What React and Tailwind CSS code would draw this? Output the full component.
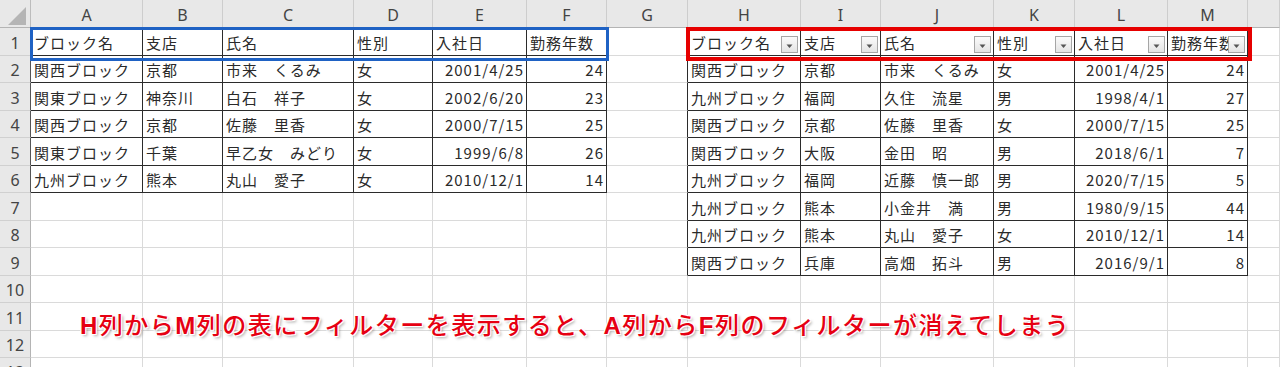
import React from "react";

const COLS = ["A", "B", "C", "D", "E", "F", "G", "H", "I", "J", "K", "L", "M", ""];

const HEAD = ["ブロック名", "支店", "氏名", "性別", "入社日", "勤務年数"];

const LEFT = [
  HEAD,
  ["関西ブロック", "京都", "市来　くるみ", "女", "2001/4/25", "24"],
  ["関東ブロック", "神奈川", "白石　祥子", "女", "2002/6/20", "23"],
  ["関西ブロック", "京都", "佐藤　里香", "女", "2000/7/15", "25"],
  ["関東ブロック", "千葉", "早乙女　みどり", "女", "1999/6/8", "26"],
  ["九州ブロック", "熊本", "丸山　愛子", "女", "2010/12/1", "14"],
];

const RIGHT = [
  HEAD,
  ["関西ブロック", "京都", "市来　くるみ", "女", "2001/4/25", "24"],
  ["九州ブロック", "福岡", "久住　流星", "男", "1998/4/1", "27"],
  ["関西ブロック", "京都", "佐藤　里香", "女", "2000/7/15", "25"],
  ["関西ブロック", "大阪", "金田　昭", "男", "2018/6/1", "7"],
  ["九州ブロック", "福岡", "近藤　慎一郎", "男", "2020/7/15", "5"],
  ["九州ブロック", "熊本", "小金井　満", "男", "1980/9/15", "44"],
  ["九州ブロック", "熊本", "丸山　愛子", "女", "2010/12/1", "14"],
  ["関西ブロック", "兵庫", "高畑　拓斗", "男", "2016/9/1", "8"],
];

function FilterButton() {
  return (
    <div className="absolute right-[2px] bottom-[2px] w-[17px] h-[17px] border border-[#a6a6a6] bg-gradient-to-b from-[#fbfbfb] to-[#e4e4e4] flex items-center justify-center">
      <svg width="7" height="5" viewBox="0 0 7 5" className="mt-[3px]">
        <path d="M0.5 0.5 L6.5 0.5 L3.5 4 Z" fill="#555" />
      </svg>
    </div>
  );
}

function Cell({ r, c }) {
  let text = "";
  let inTable = false;
  let filter = false;
  if (r >= 1 && r <= 6 && c >= 1 && c <= 6) {
    text = LEFT[r - 1][c - 1];
    inTable = true;
  }
  if (r >= 1 && r <= 9 && c >= 8 && c <= 13) {
    text = RIGHT[r - 1][c - 8];
    inTable = true;
    if (r === 1) filter = true;
  }
  const numeric = r >= 2 && (c === 5 || c === 6 || c === 12 || c === 13);
  const rightBlack = inTable || (c === 7 && r >= 1 && r <= 9);
  const bottomBlack = inTable;
  return (
    <div
      className={[
        "relative overflow-hidden flex items-center whitespace-nowrap border-r border-b text-[15px] tracking-[1px] text-[#2a2a2a]",
        rightBlack ? "border-r-[#2b2b2b]" : "border-r-[#dadada]",
        bottomBlack ? "border-b-[#2b2b2b]" : "border-b-[#dadada]",
        numeric ? "justify-end pr-[2px]" : "pl-[3px]",
      ].join(" ")}
    >
      <span className="leading-none pt-[1px]">{text}</span>
      {filter && <FilterButton />}
    </div>
  );
}

export default function App() {
  const rows = [];
  rows.push(
    <div
      key="corner"
      className="relative bg-[#e8e8e8] border-r border-b border-r-[#bcbcbc] border-b-[#b4b4b4]"
    >
      <svg width="30" height="27" className="absolute left-0 top-0">
        <path d="M8 25 L26 25 L26 7 Z" fill="#b5b5b5" />
      </svg>
    </div>
  );
  COLS.forEach((L, i) =>
    rows.push(
      <div
        key={"h" + i}
        className="bg-[#e8e8e8] border-r border-b border-r-[#cdcdcd] border-b-[#b4b4b4] flex items-center justify-center pt-[3px] text-[16px] text-[#444] font-['Noto_Sans',sans-serif]"
      >
        {L}
      </div>
    )
  );
  for (let r = 1; r <= 13; r++) {
    rows.push(
      <div
        key={"rh" + r}
        className={[
          "bg-[#e8e8e8] border-r border-b border-b-[#d0d0d0] flex items-center justify-center pt-[2px] text-[16px] text-[#444] font-['Noto_Sans',sans-serif]",
          r <= 6 ? "border-r-[#555]" : "border-r-[#b4b4b4]",
        ].join(" ")}
      >
        {r}
      </div>
    );
    for (let c = 1; c <= 14; c++) {
      rows.push(<Cell key={r + "-" + c} r={r} c={c} />);
    }
  }

  return (
    <div className="relative w-[1280px] h-[367px] overflow-hidden bg-white font-['Noto_Sans_CJK_JP',sans-serif]">
      <div className="grid grid-cols-[31px_112px_80px_131px_79px_94px_80px_81px_113px_80px_113px_81px_93px_80px_32px] grid-rows-[28px_28px_27px_28px_27px_28px_27px_28px_27px_28px_27px_28px_27px_27px]">
        {rows}
      </div>
      <div className="absolute left-[30px] top-[27px] w-[579px] h-[34px] border-[3px] border-[#1f62c4]" />
      <div className="absolute left-[686px] top-[27px] w-[566px] h-[34px] border-[4px] border-[#e60000]" />
      <div className="absolute left-[80px] top-[308px] leading-[32px] text-[24px] font-medium tracking-[1.5px] text-[#e60012] whitespace-nowrap [text-shadow:-1px_-1px_0_#fff,1px_-1px_0_#fff,-1px_1px_0_#fff,1px_1px_0_#fff,2px_2px_3px_rgba(0,0,0,0.35)]">
        <b className="font-['Liberation_Sans',sans-serif] font-bold">H</b>列から<b className="font-['Liberation_Sans',sans-serif] font-bold">M</b>列の表にフィルターを表示すると、<b className="font-['Liberation_Sans',sans-serif] font-bold">A</b>列から<b className="font-['Liberation_Sans',sans-serif] font-bold">F</b>列のフィルターが消えてしまう
      </div>
    </div>
  );
}
